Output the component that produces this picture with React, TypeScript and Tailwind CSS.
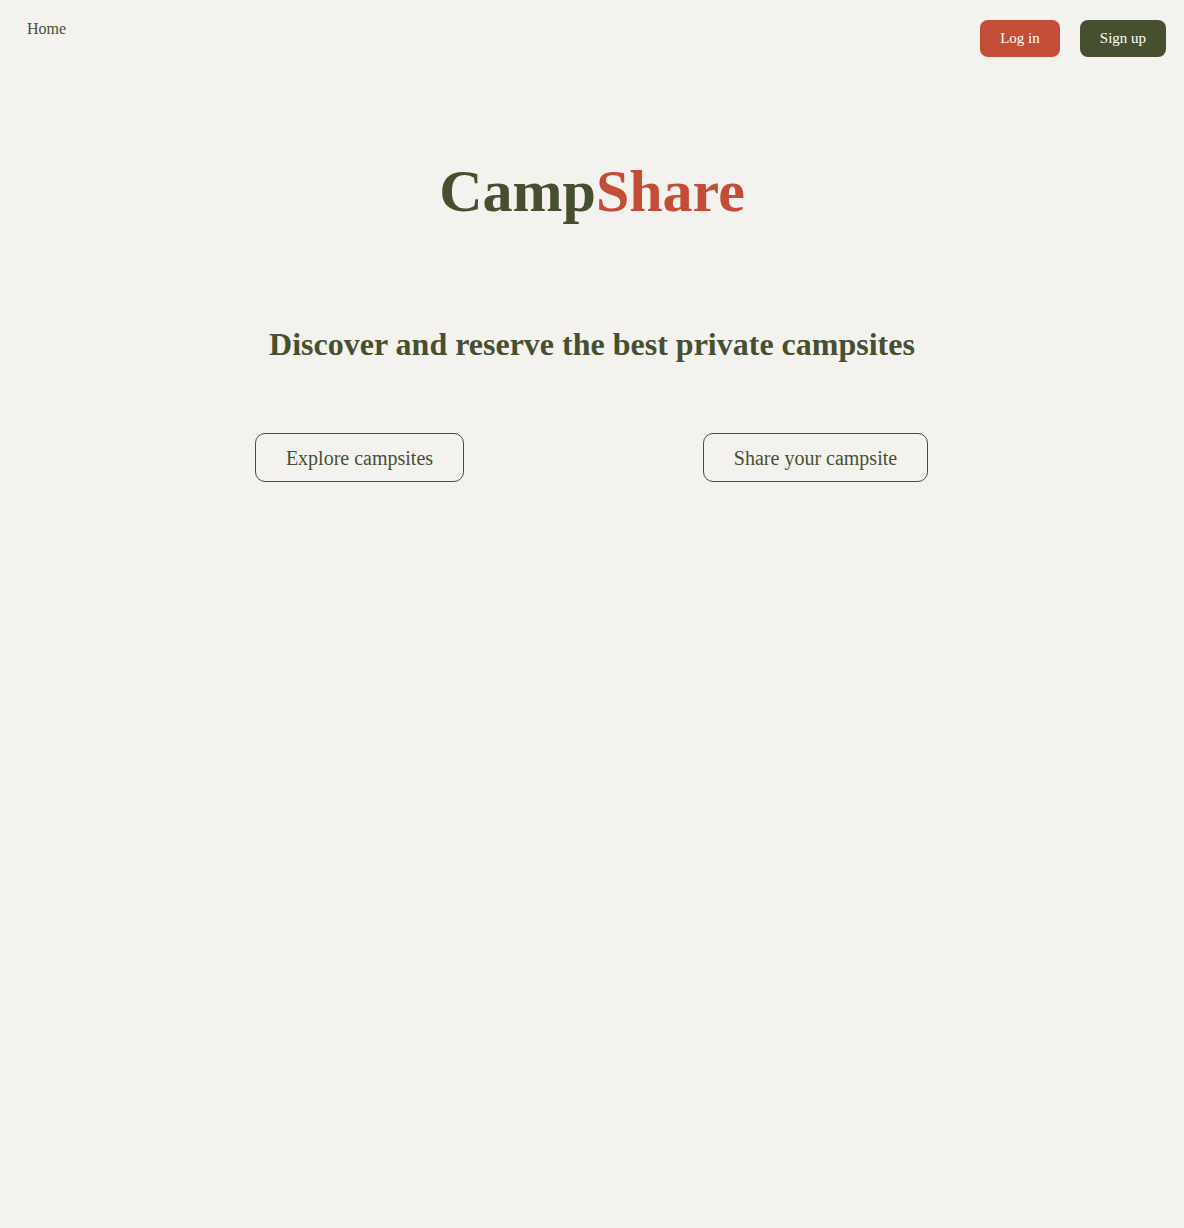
import React from "react";

const serif = { fontFamily: '"Liberation Serif", "Times New Roman", serif' };

const App: React.FC = () => {
  return (
    <div className="min-h-[1228px] bg-[#f3f2ef] text-[#465031]" style={serif}>
      {/* Top bar */}
      <header className="flex items-start justify-between pl-[27px] pr-[18px] pt-[20px]">
        <a className="text-[16px] leading-[18px]">Home</a>
        <div className="flex gap-[20px]">
          <button className="h-[37px] w-[80px] rounded-[8px] bg-[#c44d37] text-[15px] text-white">
            Log in
          </button>
          <button className="h-[37px] w-[86px] rounded-[8px] bg-[#465031] text-[15px] text-white">
            Sign up
          </button>
        </div>
      </header>

      {/* Hero */}
      <main className="flex flex-col items-center">
        <h1 className="mt-[98px] text-[60px] font-bold leading-[72px]">
          Camp<span className="text-[#c44d37]">Share</span>
        </h1>
        <h2 className="mt-[97px] text-[32px] font-bold leading-[40px]">
          Discover and reserve the best private campsites
        </h2>
        <div className="mt-[69px] flex w-full justify-center pr-[1px]">
          <button className="h-[49px] w-[209px] rounded-[10px] border border-[#465031] text-[20px]">
            Explore campsites
          </button>
          <button className="ml-[239px] h-[49px] w-[225px] rounded-[10px] border border-[#465031] text-[20px]">
            Share your campsite
          </button>
        </div>
      </main>
    </div>
  );
};

export default App;
